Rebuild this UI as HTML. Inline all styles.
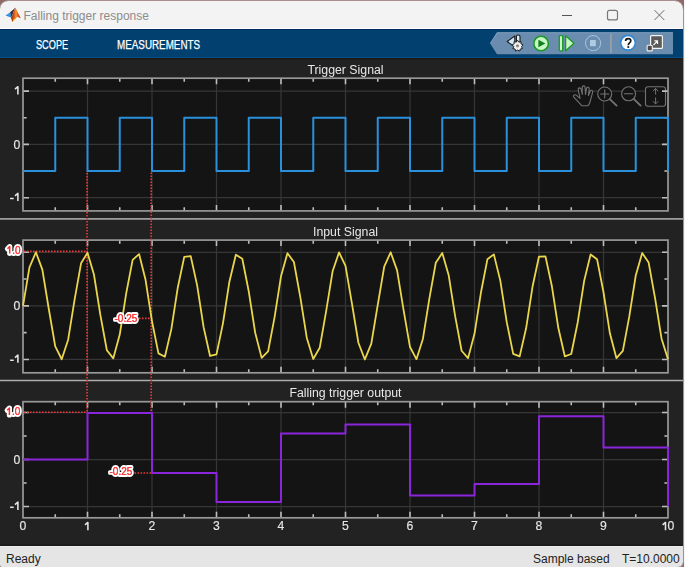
<!DOCTYPE html>
<html><head><meta charset="utf-8">
<style>
*{margin:0;padding:0;box-sizing:border-box}
html,body{width:685px;height:567px;overflow:hidden;background:#f4f4f4;font-family:"Liberation Sans",sans-serif}
#win{position:absolute;left:0;top:1px;width:683px;height:566px;background:#222;border-radius:8px 8px 5px 2px;overflow:hidden;box-shadow:0 0 0 0.5px rgba(255,255,255,0.5)}
#title{position:absolute;left:0;top:0;width:683px;height:27px;background:#f3f3f3}
#title .t{position:absolute;left:23.5px;top:7.5px;font-size:12px;color:#8c8c8c;white-space:nowrap}
#wline{position:absolute;left:0;top:27px;width:683px;height:1px;background:#fff}
#tb{position:absolute;left:0;top:28px;width:683px;height:29px;background:#024070;border-top:1.5px solid #002c5e;box-shadow:inset 0 -1px 0 #064a86}
#tbl{position:absolute;left:0;top:57px;width:683px;height:1.5px;background:#1d1b18}
#tb .m{position:absolute;top:8px;color:#fff;font-size:12px;white-space:nowrap;transform-origin:0 0;transform:scaleX(0.82);-webkit-text-stroke:0.25px #fff}
#status{position:absolute;left:0;top:545px;width:683px;height:21px;background:#e5e5e5;border-top:1px solid #ebebeb}
#sdk{position:absolute;left:0;top:543px;width:683px;height:2px;background:#1c1c1c}
#status span{position:absolute;top:4.6px;font-size:12px;color:#222;white-space:nowrap}
svg text.tl{font-size:12.2px;fill:#e6e6e6;stroke:#e6e6e6;stroke-width:0.15px}
svg text.tt{font-size:12.3px;fill:#e8e8e8}
svg text.an{font-size:10px;fill:#ff3030;stroke:#fff;stroke-width:3.8px;paint-order:stroke;stroke-linejoin:round}
svg text.an2{font-size:10px;fill:#ff3a3a;stroke:#ff3a3a;stroke-width:0.15px}
</style></head><body>
<div style="position:absolute;left:0;top:0;width:684px;height:567px;background:#8e6a68"></div>
<div id="win">
<div id="title">
  <svg style="position:absolute;left:0;top:-1px" width="24" height="26">
    <defs><linearGradient id="lg" x1="10" y1="0" x2="21" y2="0" gradientUnits="userSpaceOnUse">
      <stop offset="0" stop-color="#8a2a16"/><stop offset="0.35" stop-color="#c8501c"/><stop offset="0.55" stop-color="#f29a2e"/><stop offset="0.8" stop-color="#d8401c"/><stop offset="1" stop-color="#b82418"/></linearGradient></defs>
    <path d="M5.3 15.4L10.2 12.6L13.8 9.4L15.5 7.5L20.8 18.6L17.5 16.8L12.3 21.9L10.8 17.3Z" fill="#fff" stroke="#fff" stroke-width="1.6" stroke-linejoin="round" opacity="0.7"/>
    <path d="M5.3 15.4L10 12.4L13.4 9.6L12.2 13.2L10.8 17.4Z" fill="#3a92dc"/>
    <path d="M10 12.4L13.4 9.6L15.5 7.5L13.5 12L12.3 15.5L10.8 17.4L11 14Z" fill="#4a2a3c"/>
    <path d="M15.5 7.5L20.8 18.6L17.5 16.8L12.3 21.9L10.8 17.4L12.3 15.5L13.5 12Z" fill="url(#lg)"/>
    <path d="M12.3 21.9L14 18.5L15.5 19.5Z" fill="#f6c030"/>
  </svg>
  <div class="t">Falling trigger response</div>
  <svg style="position:absolute;left:555px;top:5px" width="120" height="20">
    <path d="M7 9.5H17" stroke="#555" stroke-width="1"/>
    <rect x="52.5" y="4.3" width="10" height="9.6" rx="2" fill="none" stroke="#777" stroke-width="1.2"/>
    <path d="M99.5 4.2L109.3 14M109.3 4.2L99.5 14" stroke="#6a6a6a" stroke-width="1"/>
  </svg>
</div>
<div id="wline"></div><div id="tbl"></div>
<div id="tb">
  <div class="m" style="left:35.5px;transform:scaleX(0.765)">SCOPE</div>
  <div class="m" style="left:117px">MEASUREMENTS</div>
</div>
<svg style="position:absolute;left:0;top:-1px" width="683" height="60">
  <path d="M490 43.2L497 32.3H673V54.3H497Z" fill="#6a8daf"/>
  <path d="M490.5 43.2L497.2 32.8H673" fill="none" stroke="#7c9cbb" stroke-width="1"/>
  <!-- settings -->
  <path d="M514.8 36L507.2 41.5L514.8 47Z" fill="#cfe8fb" stroke="#1b1b1b" stroke-width="1.1" stroke-linejoin="round"/>
  <rect x="516.4" y="35" width="3.6" height="8" rx="1.6" fill="#d8ecfc" stroke="#1b1b1b" stroke-width="1.1"/>
  <g transform="translate(517.5 45.8)">
    <path d="M0 -5.6L1.3 -3.6L3.5 -4.3L3.4 -2L5.5 -1L4 0.8L5 2.8L2.8 3.2L2.2 5.4L0.2 4.2L-1.9 5.4L-2.4 3.2L-4.7 2.8L-3.7 0.8L-5.4 -1L-3.3 -2L-3.4 -4.3L-1.3 -3.6Z" fill="#f2f2f2" stroke="#222" stroke-width="1"/>
    <circle r="1.6" fill="#8a8a8a"/>
  </g>
  <!-- play -->
  <circle cx="541.1" cy="43.5" r="7.3" fill="#c9f6c3" stroke="#179a26" stroke-width="1.6"/>
  <path d="M538.4 39.8L545.3 43.5L538.4 47.2Z" fill="#0d7f1f"/>
  <!-- step -->
  <rect x="559.3" y="35.6" width="3.4" height="15.2" rx="0.8" fill="#c9f6c3" stroke="#179a26" stroke-width="1.3"/>
  <path d="M565.6 35.8L574 43.3L565.6 50.8Z" fill="#c9f6c3" stroke="#179a26" stroke-width="1.3" stroke-linejoin="round"/>
  <!-- stop -->
  <circle cx="593.1" cy="43.1" r="7.6" fill="none" stroke="#a9c3da" stroke-width="1"/>
  <rect x="590" y="40" width="5.8" height="6.2" fill="#afcae2"/>
  <!-- sep -->
  <rect x="610.2" y="34" width="1.4" height="18.8" fill="#9fa6ad"/>
  <!-- help -->
  <circle cx="628" cy="42.8" r="7.3" fill="#fff" stroke="#2a86d8" stroke-width="1.5"/>
  <path d="M625.6 41Q625.6 38.6 628.2 38.6Q630.8 38.6 630.8 40.8Q630.8 42.1 629.5 42.9Q628.3 43.6 628.3 45.2" fill="none" stroke="#151515" stroke-width="1.7"/>
  <rect x="627.4" y="46.2" width="1.8" height="1.7" fill="#151515"/>
  <!-- undock -->
  <rect x="650.6" y="35.6" width="11.8" height="12.8" rx="1" fill="#5a5a5a" stroke="#f4f4f4" stroke-width="1.2"/>
  <path d="M653.5 45L657.3 41.2M654.3 40.8H657.5V44" fill="none" stroke="#f4f4f4" stroke-width="1.2"/>
  <rect x="647.1" y="45.3" width="5.2" height="5.6" rx="1" fill="#4a4a4a" stroke="#f4f4f4" stroke-width="1.1"/>
</svg>
<svg style="position:absolute;left:0;top:-1px;will-change:transform" width="683" height="567">
<rect x="0" y="218.1" width="683" height="1.6" fill="#aaaaaa"/>
<rect x="0" y="379.75" width="683" height="1.5" fill="#adadad"/>
<rect x="23.0" y="78.2" width="645.0" height="132.7" fill="#141414"/>
<path d="M87.50 78.20V210.90 M152.00 78.20V210.90 M216.50 78.20V210.90 M281.00 78.20V210.90 M345.50 78.20V210.90 M410.00 78.20V210.90 M474.50 78.20V210.90 M539.00 78.20V210.90 M603.50 78.20V210.90 M23.00 91.10H668.00 M23.00 144.40H668.00 M23.00 197.70H668.00" stroke="#363636" stroke-width="1.25" fill="none"/>
<g fill="#141414" stroke="#737373" stroke-width="1.1" stroke-linecap="round" stroke-linejoin="round">
<circle cx="604.7" cy="94" r="7"/><path d="M600.6 94H608.8M604.7 89.9V98.1"/><path d="M609.8 99.1L616.6 105.6" stroke-width="1.9"/>
<circle cx="628.6" cy="93.8" r="7"/><path d="M624.5 93.8H632.7"/><path d="M633.7 98.9L640.6 105.6" stroke-width="1.9"/>
<rect x="645.5" y="86.7" width="20" height="19.5" rx="2.5"/><path d="M655.6 88.6V94.2M653.2 90.9L655.6 88.5L658 90.9M655.6 97.8V103.8M653.2 101.5L655.6 103.9L658 101.5" stroke-width="1"/>
<path d="M582 105.8L573.8 97.2Q572.9 95.8 574.2 95Q575.3 94.4 576.5 95.4L580 98.3L578.2 89.6Q578 88 579.5 87.9Q580.9 87.9 581.2 89.4L582.3 94.5L582.2 87.2Q582.3 85.9 583.7 85.9Q585 85.9 585.1 87.2L585.5 94.5L586.5 88.3Q586.9 87 588.2 87.2Q589.4 87.5 589.2 88.8L588.4 95.5L590.3 91.2Q590.9 90 592 90.4Q593.1 90.9 592.7 92.1L589.8 102.5Q589.1 105 587.8 105.8Z"/>
</g>
<path d="M55.25 78.20v3.6 M55.25 210.90v-3.6 M87.50 78.20v6 M87.50 210.90v-6 M119.75 78.20v3.6 M119.75 210.90v-3.6 M152.00 78.20v6 M152.00 210.90v-6 M184.25 78.20v3.6 M184.25 210.90v-3.6 M216.50 78.20v6 M216.50 210.90v-6 M248.75 78.20v3.6 M248.75 210.90v-3.6 M281.00 78.20v6 M281.00 210.90v-6 M313.25 78.20v3.6 M313.25 210.90v-3.6 M345.50 78.20v6 M345.50 210.90v-6 M377.75 78.20v3.6 M377.75 210.90v-3.6 M410.00 78.20v6 M410.00 210.90v-6 M442.25 78.20v3.6 M442.25 210.90v-3.6 M474.50 78.20v6 M474.50 210.90v-6 M506.75 78.20v3.6 M506.75 210.90v-3.6 M539.00 78.20v6 M539.00 210.90v-6 M571.25 78.20v3.6 M571.25 210.90v-3.6 M603.50 78.20v6 M603.50 210.90v-6 M635.75 78.20v3.6 M635.75 210.90v-3.6 M23.00 197.70h6 M668.00 197.70h-6 M23.00 171.05h3.6 M668.00 171.05h-3.6 M23.00 144.40h6 M668.00 144.40h-6 M23.00 117.75h3.6 M668.00 117.75h-3.6 M23.00 91.10h6 M668.00 91.10h-6" stroke="#bdbdbd" stroke-width="1.6" fill="none"/>
<rect x="23.0" y="78.2" width="645.0" height="132.7" fill="none" stroke="#989898" stroke-width="1.7"/>
<path d="M17.90 94.50V86.70L15.00 89.20" stroke="#e6e6e6" stroke-width="1.55" fill="none" stroke-linejoin="round" stroke-linecap="butt"/>
<text x="20.2" y="148.50" text-anchor="end" class="tl">0</text>
<path d="M17.90 201.10V193.30L15.00 195.80" stroke="#e6e6e6" stroke-width="1.55" fill="none" stroke-linejoin="round" stroke-linecap="butt"/>
<path d="M10.1 198.50h3.6" stroke="#e6e6e6" stroke-width="1.5"/>
<text x="345.50" y="73.7" text-anchor="middle" class="tt">Trigger Signal</text>
<rect x="23.0" y="240.1" width="645.0" height="132.70000000000002" fill="#141414"/>
<path d="M87.50 240.10V372.80 M152.00 240.10V372.80 M216.50 240.10V372.80 M281.00 240.10V372.80 M345.50 240.10V372.80 M410.00 240.10V372.80 M474.50 240.10V372.80 M539.00 240.10V372.80 M603.50 240.10V372.80 M23.00 252.25H668.00 M23.00 305.85H668.00 M23.00 359.45H668.00" stroke="#363636" stroke-width="1.25" fill="none"/>
<path d="M55.25 240.10v3.6 M55.25 372.80v-3.6 M87.50 240.10v6 M87.50 372.80v-6 M119.75 240.10v3.6 M119.75 372.80v-3.6 M152.00 240.10v6 M152.00 372.80v-6 M184.25 240.10v3.6 M184.25 372.80v-3.6 M216.50 240.10v6 M216.50 372.80v-6 M248.75 240.10v3.6 M248.75 372.80v-3.6 M281.00 240.10v6 M281.00 372.80v-6 M313.25 240.10v3.6 M313.25 372.80v-3.6 M345.50 240.10v6 M345.50 372.80v-6 M377.75 240.10v3.6 M377.75 372.80v-3.6 M410.00 240.10v6 M410.00 372.80v-6 M442.25 240.10v3.6 M442.25 372.80v-3.6 M474.50 240.10v6 M474.50 372.80v-6 M506.75 240.10v3.6 M506.75 372.80v-3.6 M539.00 240.10v6 M539.00 372.80v-6 M571.25 240.10v3.6 M571.25 372.80v-3.6 M603.50 240.10v6 M603.50 372.80v-6 M635.75 240.10v3.6 M635.75 372.80v-3.6 M23.00 359.45h6 M668.00 359.45h-6 M23.00 332.65h3.6 M668.00 332.65h-3.6 M23.00 305.85h6 M668.00 305.85h-6 M23.00 279.05h3.6 M668.00 279.05h-3.6 M23.00 252.25h6 M668.00 252.25h-6" stroke="#bdbdbd" stroke-width="1.6" fill="none"/>
<rect x="23.0" y="240.1" width="645.0" height="132.70000000000002" fill="none" stroke="#989898" stroke-width="1.7"/>
<path d="M17.90 255.65V247.85L15.00 250.35" stroke="#e6e6e6" stroke-width="1.55" fill="none" stroke-linejoin="round" stroke-linecap="butt"/>
<text x="20.2" y="309.95" text-anchor="end" class="tl">0</text>
<path d="M17.90 362.85V355.05L15.00 357.55" stroke="#e6e6e6" stroke-width="1.55" fill="none" stroke-linejoin="round" stroke-linecap="butt"/>
<path d="M10.1 360.25h3.6" stroke="#e6e6e6" stroke-width="1.5"/>
<text x="345.50" y="235.5" text-anchor="middle" class="tt">Input Signal</text>
<rect x="23.0" y="401.7" width="645.0" height="116.09999999999997" fill="#141414"/>
<path d="M87.50 401.70V517.80 M152.00 401.70V517.80 M216.50 401.70V517.80 M281.00 401.70V517.80 M345.50 401.70V517.80 M410.00 401.70V517.80 M474.50 401.70V517.80 M539.00 401.70V517.80 M603.50 401.70V517.80 M23.00 412.50H668.00 M23.00 459.50H668.00 M23.00 506.50H668.00" stroke="#363636" stroke-width="1.25" fill="none"/>
<path d="M55.25 401.70v3.6 M55.25 517.80v-3.6 M87.50 401.70v6 M87.50 517.80v-6 M119.75 401.70v3.6 M119.75 517.80v-3.6 M152.00 401.70v6 M152.00 517.80v-6 M184.25 401.70v3.6 M184.25 517.80v-3.6 M216.50 401.70v6 M216.50 517.80v-6 M248.75 401.70v3.6 M248.75 517.80v-3.6 M281.00 401.70v6 M281.00 517.80v-6 M313.25 401.70v3.6 M313.25 517.80v-3.6 M345.50 401.70v6 M345.50 517.80v-6 M377.75 401.70v3.6 M377.75 517.80v-3.6 M410.00 401.70v6 M410.00 517.80v-6 M442.25 401.70v3.6 M442.25 517.80v-3.6 M474.50 401.70v6 M474.50 517.80v-6 M506.75 401.70v3.6 M506.75 517.80v-3.6 M539.00 401.70v6 M539.00 517.80v-6 M571.25 401.70v3.6 M571.25 517.80v-3.6 M603.50 401.70v6 M603.50 517.80v-6 M635.75 401.70v3.6 M635.75 517.80v-3.6 M23.00 506.50h6 M668.00 506.50h-6 M23.00 483.00h3.6 M668.00 483.00h-3.6 M23.00 459.50h6 M668.00 459.50h-6 M23.00 436.00h3.6 M668.00 436.00h-3.6 M23.00 412.50h6 M668.00 412.50h-6" stroke="#bdbdbd" stroke-width="1.6" fill="none"/>
<rect x="23.0" y="401.7" width="645.0" height="116.09999999999997" fill="none" stroke="#989898" stroke-width="1.7"/>
<path d="M17.90 415.90V408.10L15.00 410.60" stroke="#e6e6e6" stroke-width="1.55" fill="none" stroke-linejoin="round" stroke-linecap="butt"/>
<text x="20.2" y="463.60" text-anchor="end" class="tl">0</text>
<path d="M17.90 509.90V502.10L15.00 504.60" stroke="#e6e6e6" stroke-width="1.55" fill="none" stroke-linejoin="round" stroke-linecap="butt"/>
<path d="M10.1 507.30h3.6" stroke="#e6e6e6" stroke-width="1.5"/>
<text x="345.50" y="397" text-anchor="middle" class="tt">Falling trigger output</text>
<text x="23.00" y="530.2" text-anchor="middle" class="tl">0</text>
<path d="M87.90 530.20V522.40L85.00 524.90" stroke="#e6e6e6" stroke-width="1.55" fill="none" stroke-linejoin="round" stroke-linecap="butt"/>
<text x="152.00" y="530.2" text-anchor="middle" class="tl">2</text>
<text x="216.50" y="530.2" text-anchor="middle" class="tl">3</text>
<text x="281.00" y="530.2" text-anchor="middle" class="tl">4</text>
<text x="345.50" y="530.2" text-anchor="middle" class="tl">5</text>
<text x="410.00" y="530.2" text-anchor="middle" class="tl">6</text>
<text x="474.50" y="530.2" text-anchor="middle" class="tl">7</text>
<text x="539.00" y="530.2" text-anchor="middle" class="tl">8</text>
<text x="603.50" y="530.2" text-anchor="middle" class="tl">9</text>
<path d="M665.50 530.20V522.40L662.60 524.90" stroke="#e6e6e6" stroke-width="1.55" fill="none" stroke-linejoin="round" stroke-linecap="butt"/>
<text x="667.4" y="530.2" class="tl">0</text>
<path d="M87.05 171.05V413.00" stroke="#e83a3a" stroke-width="1.65" stroke-dasharray="1.55 1.45" fill="none" stroke-dashoffset="1.1"/>
<path d="M151.20 171.05V413.50" stroke="#e83a3a" stroke-width="1.65" stroke-dasharray="1.55 1.45" fill="none" stroke-dashoffset="1.5"/>
<path d="M24.00 251.4H87.50" stroke="#e83a3a" stroke-width="1.65" stroke-dasharray="1.55 1.45" fill="none"/>
<path d="M139 318.4H152.00" stroke="#e83a3a" stroke-width="1.65" stroke-dasharray="1.55 1.45" fill="none"/>
<path d="M24.00 412.2H87.50" stroke="#e83a3a" stroke-width="1.65" stroke-dasharray="1.55 1.45" fill="none"/>
<path d="M134.5 473H152.00" stroke="#e83a3a" stroke-width="1.65" stroke-dasharray="1.55 1.45" fill="none"/>
<path d="M23.00 171.05H55.25V117.75H87.50V171.05H119.75V117.75H152.00V171.05H184.25V117.75H216.50V171.05H248.75V117.75H281.00V171.05H313.25V117.75H345.50V171.05H377.75V117.75H410.00V171.05H442.25V117.75H474.50V171.05H506.75V117.75H539.00V171.05H571.25V117.75H603.50V171.05H635.75V117.75H668.00V171.05" stroke="#2a90dc" stroke-width="2" fill="none" stroke-linejoin="round"/>
<polyline points="23.00,305.85 29.45,267.40 35.90,252.27 42.35,269.65 48.80,308.98 55.25,346.41 61.70,359.24 68.15,339.69 74.60,299.60 81.05,263.31 87.50,252.82 93.95,274.50 100.40,315.19 106.85,350.22 113.30,358.33 119.75,334.61 126.20,293.44 132.65,259.80 139.10,254.09 145.55,279.78 152.00,321.28 158.45,353.42 164.90,356.71 171.35,329.14 177.80,287.45 184.25,256.92 190.70,256.07 197.15,285.41 203.60,327.16 210.05,355.98 216.50,354.39 222.95,323.36 229.40,281.71 235.85,254.70 242.30,258.72 248.75,291.33 255.20,332.75 261.65,357.85 268.10,351.41 274.55,317.33 281.00,276.29 287.45,253.18 293.90,262.02 300.35,297.44 306.80,337.97 313.25,359.01 319.70,347.81 326.15,311.15 332.60,271.28 339.05,252.38 345.50,265.91 351.95,303.67 358.40,342.75 364.85,359.45 371.30,343.63 377.75,304.90 384.20,266.74 390.65,252.31 397.10,270.35 403.55,309.93 410.00,347.03 416.45,359.15 422.90,338.94 429.35,298.66 435.80,262.74 442.25,252.97 448.70,275.27 455.15,316.13 461.60,350.75 468.05,358.13 474.50,333.81 480.95,292.52 487.40,259.32 493.85,254.35 500.30,280.61 506.75,322.19 513.20,353.85 519.65,356.40 526.10,328.28 532.55,286.56 539.00,256.54 545.45,256.43 551.90,286.30 558.35,328.03 564.80,356.31 571.25,353.98 577.70,322.46 584.15,280.86 590.60,254.42 597.05,259.18 603.50,292.25 609.95,333.56 616.40,358.07 622.85,350.90 629.30,316.41 635.75,275.51 642.20,253.01 648.65,262.57 655.10,298.38 661.55,338.72 668.00,359.12" stroke="#ead64c" stroke-width="1.8" fill="none" stroke-linejoin="round"/>
<path d="M23.00 459.50H87.50V413.00H152.00V473.03H216.50V502.06H281.00V433.58H345.50V424.48H410.00V495.61H474.50V484.01H539.00V416.26H603.50V447.57H668.00V506.21" stroke="#8a25dc" stroke-width="2" fill="none" stroke-linejoin="round"/>
<text x="137.3" y="321.8" text-anchor="end" class="an">-0.25</text>
<text x="137.3" y="321.8" text-anchor="end" class="an2">-0.25</text>
<text x="132.3" y="474.9" text-anchor="end" class="an">-0.25</text>
<text x="132.3" y="474.9" text-anchor="end" class="an2">-0.25</text>
<path d="M9.70 253.40V246.50L7.50 248.80" stroke="#fff" stroke-width="5.2" fill="none" stroke-linejoin="round" stroke-linecap="round"/>
<text x="12.30" y="253.60" class="an">.0</text>
<text x="12.30" y="253.60" class="an2">.0</text>
<path d="M9.70 253.40V246.50L7.50 248.80" stroke="#ff2e2e" stroke-width="1.5" fill="none" stroke-linejoin="round" stroke-linecap="butt"/>
<path d="M9.40 415.00V408.00L7.20 410.30" stroke="#fff" stroke-width="5.2" fill="none" stroke-linejoin="round" stroke-linecap="round"/>
<text x="12.00" y="415.20" class="an">.0</text>
<text x="12.00" y="415.20" class="an2">.0</text>
<path d="M9.40 415.00V408.00L7.20 410.30" stroke="#ff2e2e" stroke-width="1.5" fill="none" stroke-linejoin="round" stroke-linecap="butt"/>
</svg>
<div id="sdk"></div><div id="status"><span style="left:6px">Ready</span><span style="left:533px">Sample based</span><span style="left:622px">T=10.0000</span></div>
</div>
</body></html>
